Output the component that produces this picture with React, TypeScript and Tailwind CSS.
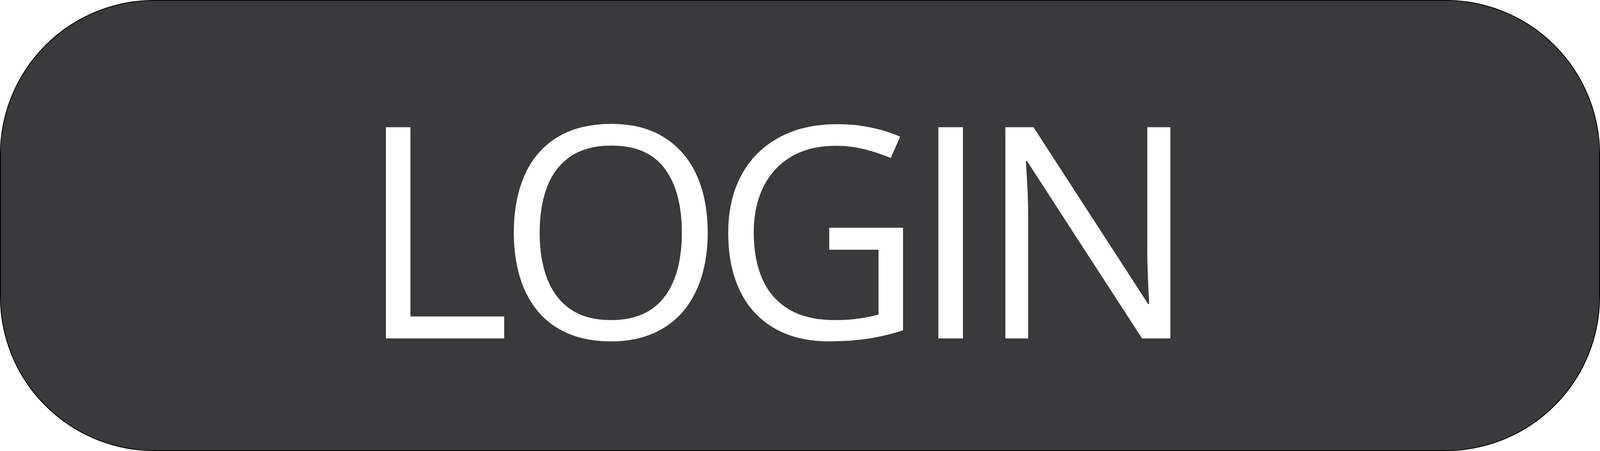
export default function App() {
  return (
    <div className="w-screen h-screen bg-white overflow-hidden">
      <div
        role="button"
        className="box-border w-full h-full rounded-[395px] border-2 border-black bg-[#3a3a3c] flex items-center pl-[912px] pb-[10px] text-white cursor-pointer"
      >
        <span className="font-['Open_Sans',sans-serif] text-[757px] leading-none font-normal tracking-[-40px] whitespace-nowrap">
          LOGIN
        </span>
      </div>
    </div>
  )
}
